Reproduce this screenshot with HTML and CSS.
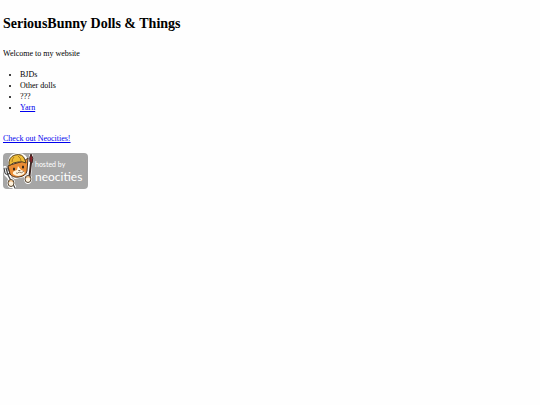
FILE: index.html
```html
<!DOCTYPE html>
<html lang="en">
<head>
<meta charset="utf-8">
<title>SeriousBunny Dolls &amp; Things</title>
<link rel="stylesheet" href="styles.css">
</head>
<body>
<h1>SeriousBunny Dolls &amp; Things</h1>
<p>Welcome to my website</p>
<ul>
<li>BJDs</li>
<li>Other dolls</li>
<li>???</li>
<li><a href="#yarn">Yarn</a></li>
</ul>
<p class="more"><a href="#neocities">Check out Neocities!</a></p>
<a class="badge" href="#neocities">
<svg width="85" height="36" viewBox="0 0 85 36" role="img" aria-label="hosted by neocities">
<rect width="85" height="36" rx="4" fill="#a6a6a6"/>
<!-- white outline behind the cat -->
<g fill="#fff" stroke="#fff" stroke-width="2" stroke-linejoin="round" stroke-linecap="round">
<path d="M6 11C6 3 10 1 15 1C20 1 24 4 25 10L25 18L21 23L12 25L6 20Z"/>
<path d="M28 3L26 24M2 15L3 21L6 24L11 34" fill="none" stroke-width="4"/>
<ellipse cx="8" cy="30" rx="3" ry="4"/><ellipse cx="25" cy="26" rx="3" ry="4"/>
</g>
<!-- fork -->
<path d="M1 15L2 20Q4 23 7 20L5 15M3 15L5 22L12 35" fill="none" stroke="#444" stroke-width="1.2" stroke-linecap="round"/>
<!-- brush -->
<path d="M28 10L26 27" stroke="#3b2420" stroke-width="2" stroke-linecap="round"/>
<path d="M27 9Q26 4 28 1Q31 5 29 10Z" fill="#8f2029" stroke="#3b2420" stroke-width="1"/>
<!-- head -->
<path d="M7 12L5 13L7 21Q10 25 16 24Q23 23 24 18L25 5L21 8Z" fill="#eb8d35" stroke="#4b3321" stroke-width="1" stroke-linejoin="round"/>
<path d="M15 13L14 17Q9 18 10 21Q15 25 21 21Q23 18 18 17Z" fill="#fff5df"/>
<path d="M6 13Q5 4 12 2Q20 0 22 7L23 10Q19 8 15 9Q10 9 6 13Z" fill="#efbd37" stroke="#59431f" stroke-width="1" stroke-linejoin="round"/>
<path d="M11 4Q9 6 9 9M15 3Q18 5 18 8" fill="none" stroke="#a77722" stroke-width="1"/>
<ellipse cx="11" cy="16" rx="1" ry="1.5" fill="#261e19"/><ellipse cx="20" cy="14" rx="1" ry="1.5" fill="#261e19"/>
<path d="M15 17L18 17L16 18Z" fill="#4b3321"/>
<path d="M13 20Q15 21 16 19Q19 21 21 18" fill="none" stroke="#6b4a2d" stroke-width=".7"/>
<!-- paws -->
<g fill="#fff3df" stroke="#51412d" stroke-width="1"><ellipse cx="8" cy="30" rx="3" ry="3.5"/><ellipse cx="25" cy="26" rx="3" ry="3.5"/></g>
<path d="M6 29Q8 26 10 29M23 25Q25 22 27 25" fill="none" stroke="#e2a15c" stroke-width="1"/>
<g fill="#fff"><text class="hosted" x="32" y="14">hosted by</text><text class="name" x="32" y="28">neocities</text></g>
</svg>
</a>
</body>
</html>
```
FILE: styles.css
```css
body {
  margin: 14px 3px;
  background: #fefefe;
  color: #000;
  font: 8px/11px "Liberation Serif", serif;
}

h1 {
  margin: 0 0 14px;
  font-size: 14px;
  line-height: 20px;
}

p {
  margin: 0 0 10px;
}

ul {
  margin: 0 0 20px;
  padding-left: 17px;
}

a {
  color: #0000ee;
}

.more {
  margin-bottom: 9px;
}

.badge,
.badge svg {
  display: block;
  width: fit-content;
}

.badge text {
  font-family: "Liberation Sans Narrow", Lato, sans-serif;
}

.badge .hosted {
  font-size: 7px;
}

.badge .name {
  font-size: 12px;
}
```
